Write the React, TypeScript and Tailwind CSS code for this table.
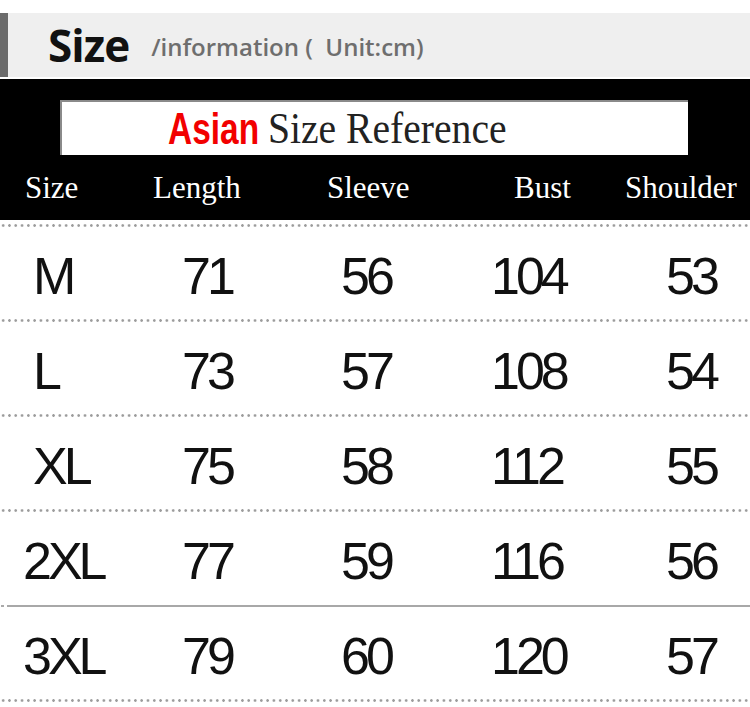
const rows = [
  { size: "M", pad: "pl-[33px]", vals: ["71", "56", "104", "53"] },
  { size: "L", pad: "pl-[33px]", vals: ["73", "57", "108", "54"] },
  { size: "XL", pad: "pl-[33px]", vals: ["75", "58", "112", "55"] },
  { size: "2XL", pad: "pl-[23px]", vals: ["77", "59", "116", "56"] },
  { size: "3XL", pad: "pl-[23px]", vals: ["79", "60", "120", "57"] },
];

function Dotted() {
  return (
    <div className="h-[3px] w-full bg-[radial-gradient(circle,#9c9c9c_1px,transparent_1.6px)] bg-[length:6.3px_3px] bg-repeat-x" />
  );
}

export default function App() {
  return (
    <div className="w-[750px] h-[707px] bg-white overflow-hidden font-['Liberation_Sans',sans-serif]">
      <div className="h-[13px]" />

      {/* title bar */}
      <div className="flex h-[64px] bg-[#efefef]">
        <div className="w-[8px] bg-[#6b6b6b]" />
        <div className="flex items-center pl-[40px]">
          <span className="font-['Open_Sans',sans-serif] font-bold text-[44px] leading-none text-[#111] tracking-[-1px]">
            Size
          </span>
          <span className="ml-[22px] mt-[4px] font-['Open_Sans',sans-serif] font-semibold text-[24px] leading-none text-[#6e6e6e]">
            /information ( &nbsp;Unit:cm)
          </span>
        </div>
      </div>

      <div className="h-[2px]" />

      {/* black header */}
      <div className="h-[141px] bg-black">
        <div className="pt-[21px] pl-[60px]">
          <div className="flex items-center w-[628px] h-[55px] bg-white border-l-2 border-t-2 border-[#8a8a8a] pl-[106px]">
            <span className="inline-block w-[88px] whitespace-nowrap origin-left scale-x-[0.76] font-bold text-[44px] leading-none text-[#f20000]">
              Asian
            </span>
            <span className="ml-[12px] inline-block w-[244px] whitespace-nowrap origin-left scale-x-[0.9] font-['Liberation_Serif',serif] text-[44px] leading-none text-[#222]">
              Size Reference
            </span>
          </div>
        </div>
        <div className="grid grid-cols-[128px_174px_187px_111px_1fr] items-center h-[65px] pl-[25px] font-['Liberation_Serif',serif] text-[31px] leading-none text-white">
          <span>Size</span>
          <span>Length</span>
          <span>Sleeve</span>
          <span>Bust</span>
          <span>Shoulder</span>
        </div>
      </div>

      <div className="h-[4px]" />
      <Dotted />

      {rows.map((r, i) => (
        <div key={r.size}>
          <div className="grid grid-cols-[182px_159px_150px_175px_1fr] items-center h-[92px] pt-[5px] text-[52px] leading-none text-[#111] tracking-[-4px]">
            <span className={r.pad}>{r.size}</span>
            {r.vals.map((v, j) => (
              <span key={j}>{v}</span>
            ))}
          </div>
          {i === 3 ? (
            <div className="flex h-[3px] items-center">
              <div className="w-[3px] h-[2px] bg-[#aaa] ml-[1px]" />
              <div className="ml-[3px] flex-1 h-[2px] bg-[#a8a8a8]" />
            </div>
          ) : (
            <Dotted />
          )}
        </div>
      ))}
    </div>
  );
}
